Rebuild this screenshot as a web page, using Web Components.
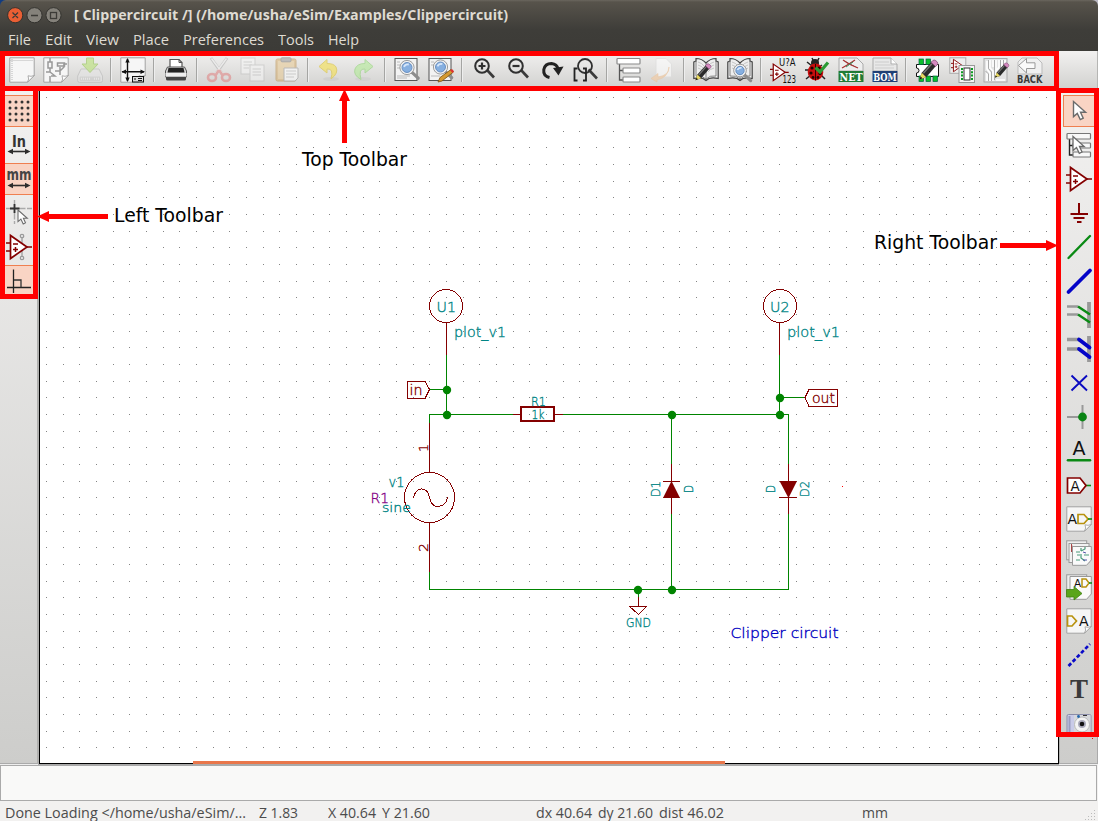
<!DOCTYPE html>
<html lang="en">
<head>
<meta charset="utf-8">
<title>Clippercircuit</title>
<style>
html,body{margin:0;padding:0;background:#fff;overflow:hidden}
body{font-family:"Open Sans","Noto Sans",sans-serif}
</style>
</head>
<body>
<schematic-window></schematic-window>
<script>
const define=(name,html,after)=>{
  const t=document.createElement('template');t.innerHTML=html;
  customElements.define(name,class extends HTMLElement{
    connectedCallback(){
      if(this.shadowRoot)return;
      this.attachShadow({mode:'open'}).appendChild(t.content.cloneNode(true));
      if(after)after(this,this.shadowRoot);
    }
  });
};

/* ---------- icon artwork, 26 x 26 grid ---------- */
const page='<path d="M.8.8H25.2V18.5L18.5 25.2H.8Z" fill="#f6f6f6" stroke="#a2a2a2"/><path d="M18.5 25.2Q20.5 22 19 18.8Q22 20 25.2 18.5Z" fill="#fff" stroke="#999" stroke-width=".8"/>';
const pencil=(x,y,s=1)=>`<g transform="translate(${x} ${y}) scale(${s})"><path d="M0 16L2 10L11 0L15 3.5L6 14Z" fill="#2b2b2b"/><path d="M3.5 10.5L11 2" stroke="#777" stroke-width="1.2"/><path d="M0 16L2 10L6 14Z" fill="#e8d860"/><path d="M0 16L1 13.4L2.6 14.9Z" fill="#111"/><path d="M10.3.8L12 -1Q13.500 -2 15.500 0Q17 1.500 16 2.700L14.400 4.500Z" fill="#d58ac0" stroke="#7d4470" stroke-width=".6"/></g>`;
const lens=(x,y,r)=>`<path d="M${x+r*.7} ${y+r*.7}l7 6.500" stroke="#8d8d8d" stroke-width="3.200" stroke-linecap="round"/><circle cx="${x}" cy="${y}" r="${r}" fill="#86afe0" stroke="#f3f3f3" stroke-width="2.400"/><circle cx="${x}" cy="${y}" r="${r+1.1}" fill="none" stroke="#777" stroke-width=".7"/><circle cx="${x}" cy="${y}" r="${r-1}" fill="none" stroke="#4a78b5" stroke-width=".8"/><path d="M${x-r*.5} ${y-r*.1}Q${x-r*.3} ${y-r*.6} ${x+r*.3} ${y-r*.5}" stroke="#d5e6fa" stroke-width="1.800" fill="none"/>`;
const book='<path d="M.8 5L3 4V1.500Q9 1.500 13 6Q17 1.500 23 1.500V4L25.200 5V21.500Q17 19.500 13 23.500Q9 19.500 .8 21.500Z" fill="#eee" stroke="#444" stroke-width="1.200"/><path d="M3 4V19Q9 18 13 22Q17 18 23 19V4M13 6V22" fill="none" stroke="#777" stroke-width=".9"/><path d="M5 5Q9 6 11 9M5 8Q9 9 11 12M5 11Q9 12 11 15M21 5Q17 6 15 9M21 8Q17 9 15 12M21 11Q17 12 15 15" fill="none" stroke="#bbb" stroke-width=".8"/>';
const zoomg='<path d="M16 13L23 20.500" stroke="#3a3a3a" stroke-width="2.600"/><circle cx="11" cy="9" r="6.800" fill="none" stroke="#303030" stroke-width="2"/>';
const opamp='<g fill="none" stroke="#840000"><path d="M4.500 1.500V24.500L21 13Z" fill="#fff" stroke-width="1.700"/><path d="M0 9H4M0 17H4M21 13H26" stroke-width="1.700"/><path d="M7 10H12M7 15.500H12M9.500 13V18" stroke-width="1.500"/></g>';
const T=(x,y,s,t,c='#111',extra='')=>`<text x="${x}" y="${y}" font-size="${s}" fill="${c}" ${extra}>${t}</text>`;
const cursor='<path d="M0 0V14L3.500 11L6.300 16.800L9 15.500L6.500 10H11.200Z" fill="#fff" stroke="#6b6b6b" stroke-width="1.300"/>';
const arrows='<path d="M4 19.500H22" stroke="#2d2d2d" stroke-width="1.600"/><path d="M1.500 19.500L7 16.800V22.200ZM24.500 19.500L19 16.800V22.200Z" fill="#2d2d2d"/>';
const icons={
new:page+'<path d="M3 2V24M1.500 3.500H24" stroke="#aaa" stroke-width=".8" stroke-dasharray="1 1"/>',
open:page+'<g fill="none" stroke="#999" stroke-width="1.500"><path d="M7 1V5M7 11V15H3M7 15L12 19H8M17 10V18M12 14H17M17 14L21 10V7H24M7 19V25"/><rect x="5" y="5" width="4" height="6"/><rect x="14.500" y="6" width="7" height="3"/></g>',
save:'<g opacity=".55"><path d="M4 12H22L25.500 19V23.500Q25.500 25.300 24 25.300H2.300Q.7 25.300 .7 23.500V19Z" fill="#e6e6e6" stroke="#b5b5b5"/><rect x="2.500" y="19.500" width="21" height="4.500" rx="1" fill="#ccc"/><path d="M4 21.800H13M17 21.800H22" stroke="#eee" stroke-width="2" stroke-dasharray="1 1"/><path d="M9.500 1H16.500V7H21L13 15.500L5 7H9.500Z" fill="#b4e06c" stroke="#8cc048"/></g>',
sheet:page+'<path d="M7.500 2V24M2 14.700H24" stroke="#111" stroke-width="1.400"/><path d="M7.500 1L5.300 5.500H9.700ZM7.500 25L5.300 20.500H9.700ZM1.500 14.700L6 12.500V17ZM25 14.700L20.500 12.500V17Z" fill="#111"/><rect x="12.500" y="19.500" width="11" height="5.500" fill="#ddd" stroke="#111"/><path d="M14 22H16M18 21.500H22M18 23.500H22" stroke="#111"/>',
print:'<path d="M7 12V2.500H16L19 5.500V12Z" fill="#fff" stroke="#555" stroke-width="1.200"/><path d="M16 2.500V5.500H19" fill="none" stroke="#555"/><path d="M4.500 10H21.500L23.500 14V20H2.500V14Z" fill="#d5d5d5" stroke="#555"/><path d="M5.500 11H20.500L21.500 15.500H4.500Z" fill="#222"/><rect x="2.500" y="16" width="21" height="3.500" fill="#eee"/><path d="M3 20H23V22Q23 23.500 21.500 23.500H4.500Q3 23.500 3 22Z" fill="#444"/>',
cut:'<g opacity=".55"><path d="M5 1L17 18M21 1L9 18" stroke="#aaa" stroke-width="3"/><path d="M5.500 1.500L17 17M20.500 1.500L9 17" stroke="#eee" stroke-width="1.500"/><g fill="none" stroke="#e08080" stroke-width="2.600"><ellipse cx="6" cy="20.500" rx="4" ry="3.500"/><ellipse cx="20" cy="20.500" rx="4" ry="3.500"/><path d="M13 13L9 19M13 13L17 19"/></g></g>',
copy:'<g opacity=".5" fill="#f8f8f8" stroke="#bbb"><rect x="1" y="1" width="14" height="16"/><path d="M3.500 5H12M3.500 8H12M3.500 11H9"/><rect x="10" y="8" width="14" height="16"/><path d="M12.500 12H21M12.500 15H21M12.500 18H21"/></g>',
paste:'<g opacity=".55"><rect x="2" y="2" width="20" height="22" rx="1.500" fill="#d8b070" stroke="#b89050"/><rect x="4" y="4" width="16" height="18" fill="#e7c890"/><rect x="7" y="0.800" width="10" height="4" rx="1" fill="#999" stroke="#777"/><path d="M10 11H24V21L21 24H10Z" fill="#fff" stroke="#999"/><path d="M12 14H22M12 17H22M12 20H20" stroke="#bbb"/></g>',
undo:'<g opacity=".65"><ellipse cx="14" cy="22" rx="8" ry="2" fill="#ccc"/><path d="M10 2.500L2 9.500L10 16V12Q17 11 14 22Q22 16 19 10Q17 6.500 10 6.500Z" fill="#f4e05a" stroke="#dcc540"/></g>',
redo:'<g opacity=".5"><ellipse cx="12" cy="22" rx="8" ry="2" fill="#ccc"/><path d="M14 2.500L22 9.500L14 16V12Q7 11 10 22.500Q2 18 4 12Q6 6.500 14 6.500Z" fill="#a9ec88" stroke="#7fd060"/></g>',
find:'<rect x="1" y="1.500" width="22" height="22" fill="#f3f3f3" stroke="#555"/><path d="M3 5H6M3 8H6M3 11H6M3 19H16M3 21H13" stroke="#bbb"/>'+lens(13,10.5,6),
findrep:'<rect x="1" y="1.500" width="22" height="22" fill="#f3f3f3" stroke="#555"/><path d="M3 5H6M3 8H6M3 19H12" stroke="#bbb"/>'+lens(12.5,10,6)+'<path d="M10 25L12 20.500L23 12.500L25.500 15L14 24Z" fill="#d59a30" stroke="#7a5010" stroke-width=".8"/><path d="M22 13.300L24 12L26 14.300L24.500 16Z" fill="#d33"/>',
zin:zoomg+'<path d="M7.500 9H14.500M11 5.500V12.500" stroke="#303030" stroke-width="2.200"/>',
zout:zoomg+'<path d="M7.500 9H14.500" stroke="#303030" stroke-width="2.200"/>',
redraw:'<path d="M10.500 20.500Q4 19 4.800 12.500Q6 6.500 12.500 6.500Q18 7 19 12" fill="none" stroke="#222" stroke-width="3"/><path d="M14 11L24.500 9.500L19.500 18.500Z" fill="#222"/>',
fit:'<path d="M15.500 12.500L24 21.500" stroke="#3a3a3a" stroke-width="2.600"/><circle cx="12" cy="9" r="7" fill="none" stroke="#303030" stroke-width="1.800"/><path d="M4.500 11.500H1.500V23.500H4.500M10 11.500H13V23.500H10" fill="none" stroke="#222" stroke-width="1.800"/>',
tree:'<path d="M3.500 7V23H8M3.500 13.500H8" fill="none" stroke="#555" stroke-width="1.300"/><g fill="#fff" stroke="#8a8a8a" stroke-width="1.200"><rect x="1" y="1.500" width="23" height="5.500" rx=".8"/><rect x="7" y="11" width="17" height="5" rx=".8"/><rect x="7" y="20" width="17" height="5" rx=".8"/></g>',
leave:'<g opacity=".55"><path d="M6 1.500H16L21.500 7V20H6Z" fill="#fff" stroke="#ddd"/><path d="M19 10Q19.500 18 8 20V16.500L1 21.500L7 25V22.800Q18 21 19 10Z" fill="#f8c898" stroke="#f0b880" stroke-width=".6"/></g>',
libedit:book+pencil(2.5,8,.95),
libview:book+lens(13,13.5,5.2),
annotate:'<g transform="translate(0 6) scale(.72)">'+opamp+'</g>'+T(9,9,11,'U?A','#111','textLength="16.500" lengthAdjust="spacingAndGlyphs"')+T(12.500,25.500,11,'123','#111','textLength="13.500" lengthAdjust="spacingAndGlyphs"'),
erc:'<path d="M3 5L8 9M1 13H5M2 22L7 18M21 22L17 18M18 8L15 10M8 1L10 5M15 1L13 5" stroke="#222" stroke-width="1.500"/><circle cx="11" cy="6" r="4" fill="#222"/><ellipse cx="11.500" cy="15" rx="7.800" ry="8.500" fill="#c60d0d"/><path d="M11.500 7V23.500" stroke="#300"/><g fill="#220000"><circle cx="8" cy="11" r="1.600"/><circle cx="15" cy="11" r="1.600"/><circle cx="7" cy="16" r="1.600"/><circle cx="16" cy="16.500" r="1.600"/><circle cx="9" cy="20.500" r="1.400"/><circle cx="14" cy="20.500" r="1.400"/></g><path d="M11.500 10.500L16 15L24 5.500" fill="none" stroke="#2b9a35" stroke-width="3.200"/>',
net:'<path d="M1 1H19L25 7V14H1Z" fill="#eee" stroke="#aaa"/><path d="M4 11L11 7L17 3M5 3L11 7L20 11" stroke="#a33" stroke-width="1.300"/><path d="M8 10L15 5" stroke="#396"/><rect x="0.500" y="14" width="25" height="11" fill="#207b35"/>'+T(1.5,23.7,11.5,'NET','#fff','font-family="DejaVu Serif" font-weight="bold" textLength="23" lengthAdjust="spacingAndGlyphs"'),
bom:'<path d="M1 1H19L25 7V14H1Z" fill="#e8e8e8" stroke="#aaa"/><path d="M19 1V7H25" fill="#fff" stroke="#aaa"/><path d="M3 5H17M3 8H22M3 11H22" stroke="#ccc" stroke-width="1"/><rect x="0.500" y="14" width="25" height="11" fill="#1f3f75"/>'+T(1.2,23.7,11.5,'BOM','#fff','font-family="DejaVu Serif" font-weight="bold" textLength="23.500" lengthAdjust="spacingAndGlyphs"'),
cvpcb:'<path d="M1.500 7.500H23.500V19.500H1.500V16A2 2 0 0 0 1.500 11Z" fill="#fff" stroke="#111"/><g fill="#0bbf2d" stroke="#064" stroke-width=".7"><rect x="4" y="2" width="4.500" height="5.500"/><rect x="11" y="2" width="4.500" height="5.500"/><rect x="4" y="19" width="4.500" height="5.500"/><rect x="11" y="19" width="4.500" height="5.500"/><rect x="18" y="19" width="4.500" height="5.500"/></g>'+pencil(4.5,4.5,1.12),
sym2fp:'<rect x=".8" y=".8" width="16" height="15.500" fill="#eee" stroke="#aaa"/><g transform="translate(2 1.500) scale(.54)">'+opamp+'</g><rect x="10" y="8.500" width="15.500" height="17" fill="#f4f4f4" stroke="#999"/><rect x="15" y="11" width="6" height="12" fill="#fff" stroke="#333"/><path d="M13 11V24M23 11V24" stroke="#0a9a20" stroke-width="2" stroke-dasharray="2 1.300"/>',
pcb:'<rect x="1" y="1.500" width="23" height="23.500" fill="#e4e4e4" stroke="#aaa"/><path d="M4 4V12L7 16V24M7 3V11L10 14V24M10 3V10M13 3V20M16 3V10L14 13M19 3V12M22 3V9M4 16V24M13 23H22" fill="none" stroke="#fff" stroke-width="1.600"/><path d="M5.500 3V11.500L8.500 15V24M11.500 3V23M17.500 3V12M20.500 3V8M2.500 14L5.500 17V24" fill="none" stroke="#999" stroke-width=".8"/>'+pencil(12,7,.85),
back:'<path d="M5 1H20L25 6V17H1V5Z" fill="#f0f0f0" stroke="#bbb"/><path d="M1.500 8.500L9.500 1.500V5.800H18V11.500H9.500V16Z" fill="#fafafa" stroke="#999"/>'+T(0,25.600,10.500,'BACK','#3a3a3a','font-weight="bold" textLength="25.500" lengthAdjust="spacingAndGlyphs"'),
grid:'<g fill="#333">'+[4,10,16,22].map(y=>[4,10,16,22].map(x=>`<circle cx="${x}" cy="${y}" r="1.500"/>`).join('')).join('')+'</g>',
inch:T(6,14.5,15,'In','#333','font-weight="bold" textLength="14" lengthAdjust="spacingAndGlyphs"')+arrows,
mm:T(.5,13.500,15,'mm','#444','font-weight="bold" textLength="25" lengthAdjust="spacingAndGlyphs"')+arrows,
cross:'<path d="M8.500 0V24M0 8.500H26" stroke="#aaa" stroke-width="1.400" stroke-dasharray="9 1.500"/><path d="M8.500 4V13M4 8.500H13.500" stroke="#333" stroke-width="1.800"/><g transform="translate(12 10) scale(.83)">'+cursor+'</g>',
pins:'<path d="M16 2V24" stroke="#aaa" stroke-width="1.600"/><g fill="#eee" stroke="#999" stroke-width="1.300"><circle cx="16" cy="2" r="1.700"/><circle cx="16" cy="24" r="1.700"/></g>'+opamp,
ortho:'<path d="M7.500 1.500V25M1 19.500H25" stroke="#222" stroke-width="1.300"/><path d="M8 12H15V19" fill="none" stroke="#333" stroke-width="1.300"/>',
arrow:'<g transform="translate(7.500 3.500) scale(1.080)">'+cursor+'</g>',
hier:'<path d="M3.500 7V23H8M3.500 13.500H8" fill="none" stroke="#222" stroke-width="1.400"/><g fill="#f8f8f8" stroke="#777" stroke-width="1.200"><rect x="1" y="1.500" width="23.500" height="5.500" rx=".8"/><rect x="7" y="11" width="17.500" height="5" rx=".8"/><rect x="7" y="20" width="17.500" height="5" rx=".8"/></g><g transform="translate(7 4.500)">'+cursor+'</g>',
opamp,
gnd:'<path d="M13 3V14M4.500 14H22M7.500 18H18.500M11 22H15.500" stroke="#840000" stroke-width="2" fill="none"/>',
wire:'<path d="M2.500 24L24 2" stroke="#0a8a14" stroke-width="2.300" stroke-linecap="round"/>',
bus:'<path d="M2.500 24L24 2.500" stroke="#0404c8" stroke-width="3.800" stroke-linecap="round"/>',
w2b:'<path d="M23 0V26" stroke="#999" stroke-width="3.800"/><path d="M1 4.500H12M1 12.500H12" stroke="#999" stroke-width="2.400"/><path d="M12 4.500L24 12.500M12 12.500L24 20.500" stroke="#0a8a14" stroke-width="2.400"/>',
b2b:'<path d="M23 0V26" stroke="#999" stroke-width="3.800"/><path d="M1 3.500H13M1 13H13" stroke="#999" stroke-width="3.600"/><path d="M13 3.500L23.500 11.500M13 13L23.500 21" stroke="#0404c8" stroke-width="3.800" stroke-linecap="round"/>',
noconn:'<path d="M5.500 5.500L21 20.500M21 5.500L5.500 20.500" stroke="#0a0ac0" stroke-width="1.900"/>',
junction:'<path d="M16.500 1V25M1 13H16" stroke="#999" stroke-width="2"/><circle cx="16.500" cy="13" r="4.400" fill="#0a8414"/>',
label:T(6.500,17,19,'A','#111','textLength="13" lengthAdjust="spacingAndGlyphs"')+'<path d="M2 22.300H24" stroke="#0a8a14" stroke-width="2.600" stroke-linecap="round"/>',
glabel:'<path d="M20 13.500H25" stroke="#0a8a14" stroke-width="1.600"/><path d="M1.500 6H14L20 13.500L14 21H1.500Z" fill="#fff" stroke="#840000" stroke-width="1.700"/>'+T(4.500,18.500,13.500,'A'),
hlabel:page+T(1.500,18,14,'A')+'<path d="M12 8.500H18L22 13L18 17.500H12Z" fill="none" stroke="#b8920e" stroke-width="1.700"/><path d="M22 13H26" stroke="#0a8a14" stroke-width="1.600"/>',
sheets:'<rect x=".7" y=".8" width="20" height="19" fill="#eee" stroke="#999"/><rect x="3" y="3.500" width="20" height="19" fill="#f2f2f2" stroke="#999"/><path d="M5.500 4V12M5.500 6L9 7" stroke="#a44" fill="none"/><path d="M6.500 6.500H25.300V20L20.500 25.300H6.500Z" fill="#fafafa" stroke="#999"/><path d="M10 12H14M15 8V11M15 11L19 9V7M15 14V18L19 21M14 15H11M18 15H23M10 20H14" stroke="#4a9a7a" fill="none" stroke-width="1.200"/><path d="M17 12L20 13M17 20H21" stroke="#55a"/>',
imp:'<rect x=".7" y=".8" width="20" height="19" fill="#eee" stroke="#999"/><path d="M4 2.500H25.300V20L20.500 25.300H4Z" fill="#fafafa" stroke="#999"/>'+T(8,13,10.500,'A')+'<path d="M16 5H20L23 9L20 13H16Z" fill="none" stroke="#b8920e" stroke-width="1.500"/><path d="M23 9H26" stroke="#0a8a14" stroke-width="1.500"/><path d="M.5 15.500H8V12.500L16 19.500L8 26V23H.5Z" fill="#5aa51a" stroke="#3f8010" stroke-width=".8"/>',
pin:page+'<path d="M1.500 8H6L10.500 13L6 18H1.500Z" fill="none" stroke="#b8920e" stroke-width="1.700"/>'+T(13,18,14,'A'),
dash:'<path d="M2.500 24L24 2" stroke="#0a0ac8" stroke-width="2.700" stroke-dasharray="3.800 2.200"/>',
text:T(4,21.500,27,'T','#3a3a3a','font-family="Liberation Serif" font-weight="bold"'),
image:'<rect x="1" y="4.500" width="24" height="21" rx="1.500" fill="#c9cbe8" stroke="#8a8ca8"/><path d="M3.500 6V24" stroke="#9a9cc0" stroke-width="2"/><rect x="8" y="5" width="16.500" height="20" fill="#d6d8dc"/><circle cx="16" cy="14.500" r="7.500" fill="#f4f4f4" stroke="#bbb"/><circle cx="16" cy="14" r="4" fill="#aab"/><circle cx="16" cy="14" r="2.300" fill="#111"/><circle cx="12.500" cy="6.500" r="1.400" fill="#26a"/><path d="M17 5.500H21" stroke="#333"/>'
};
define('tool-icon','<style>:host{display:block;width:26px;height:26px;flex:none}svg{display:block;font-family:"DejaVu Sans",sans-serif;overflow:visible}</style><svg width="26" height="26" viewBox="0 0 26 26"></svg>',
 (h,r)=>{r.querySelector('svg').innerHTML=icons[h.getAttribute('name')]||'';});

define('tool-button','<style>:host{display:flex;box-sizing:border-box;height:34px;justify-content:center;align-items:center;flex:none}:host([active]) div{background:#f9d4c4;border-top:1px solid #ef7f50;border-bottom:1px solid #ef7f50}:host([framed]) div{border-left:1px solid #ef7f50}div{box-sizing:border-box;width:100%;height:32px;display:flex;align-items:center;justify-content:center;border:0 solid}</style><div><slot></slot></div>');

/* single-line label that scales its glyphs to a given width */
define('fit-label','<style>:host{display:block;white-space:pre;flex:none;box-sizing:border-box}span{display:inline-block;transform-origin:0 50%}</style><span><slot></slot></span>',
 (h,r)=>{const s=r.querySelector('span'),w=+h.getAttribute('w');h.style.width=w+'px';
  s.style.transform=`scaleX(${w/s.getBoundingClientRect().width})`;});

define('title-bar',`<style>
:host{display:flex;flex-direction:column;height:51px;background:linear-gradient(#6a665e 0,#57534b 2px,#3e3d39 30px,#3c3b37 51px);border-radius:6px 6px 0 0;color:#dfdbd2}
.t{display:flex;height:29px;align-items:center;padding-left:7px}
svg{display:block}
fit-label{margin-left:12px;font-weight:bold;font-size:14.5px;line-height:20px}
nav{display:flex;padding-left:8px;gap:14px;height:22px;align-items:center}
nav fit-label{margin:0;font-weight:normal;font-size:14.5px;line-height:20px}
</style>
<div class="t"><svg width="55" height="18" viewBox="7 5 55 18"><g stroke="#33322e"><circle cx="15.200" cy="14.200" r="7.600" fill="#ea5f34"/><circle cx="34.500" cy="14.200" r="7.600" fill="#85827b"/><circle cx="53.500" cy="14.200" r="7.600" fill="#85827b"/></g><g fill="none" stroke="#3c3b37" stroke-width="1.300"><path d="M12.500 11.500l5.500 5.500m0-5.500l-5.500 5.500M31 14.500h7"/><rect x="50.500" y="11.500" width="6" height="6"/></g></svg>
<fit-label w="434">[ Clippercircuit /] (/home/usha/eSim/Examples/Clippercircuit)</fit-label></div>
<nav><fit-label w="23">File</fit-label><fit-label w="27">Edit</fit-label><fit-label w="33">View</fit-label><fit-label w="36">Place</fit-label><fit-label w="81">Preferences</fit-label><fit-label w="36">Tools</fit-label><fit-label w="31">Help</fit-label></nav>`);

define('top-toolbar',`<style>:host{display:flex;height:40px;box-sizing:border-box;padding:6px 0 0 9px;background:linear-gradient(#f2f1f0,#cfcfcd);border-right:1px solid #b5b5b3}
tool-icon{margin-right:8px}i{display:block;width:2px;height:24px;margin:1px 8px 0 -1px;background:linear-gradient(90deg,#a5a5a3 50%,#eee 50%);flex:none}</style><slot></slot><div id="x" style="display:contents"></div>`,
 (h,r)=>{r.getElementById('x').innerHTML='new open save | sheet | print | cut copy paste | undo redo | find findrep | zin zout redraw fit | tree leave | libedit libview | annotate erc net bom | cvpcb sym2fp pcb back'.split(' ').map(n=>n=='|'?'<i></i>':`<tool-icon name="${n}"></tool-icon>`).join('');});

define('left-toolbar',`<style>:host{display:flex;flex-direction:column;box-sizing:border-box;width:39px;padding:3px 4px 0 5px;background:linear-gradient(#f2f1f0,#cdcdcb);border-right:2px solid #b0b0ae;border-bottom:1px solid #aaa}</style>
<tool-button active><tool-icon name="grid"></tool-icon></tool-button><tool-button><tool-icon name="inch"></tool-icon></tool-button><tool-button active><tool-icon name="mm"></tool-icon></tool-button><tool-button><tool-icon name="cross"></tool-icon></tool-button><tool-button><tool-icon name="pins"></tool-icon></tool-button><tool-button active><tool-icon name="ortho"></tool-icon></tool-button>`);

define('right-toolbar',`<style>:host{display:block;box-sizing:border-box;width:39px;height:673px;background:linear-gradient(#f2f1f0,#cdcdcb);border-left:1px solid #b0b0ae;border-right:1px solid #aaa;border-bottom:1px solid #aaa}
div{display:flex;flex-direction:column;height:641px;overflow:hidden;padding:3px 3px 0 3px}</style><div></div>`,
 (h,r)=>{r.querySelector('div').innerHTML='arrow hier opamp gnd wire bus w2b b2b noconn junction label glabel hlabel sheets imp pin dash text image'.split(' ').map((n,i)=>`<tool-button ${i?'':'active framed'}><tool-icon name="${n}"></tool-icon></tool-button>`).join('');});

/* schematic sheet, drawn in window coordinates */
const st=(x,y,w,s,t,c='#008484',rot='')=>`<text x="${x}" y="${y}" textLength="${w}" lengthAdjust="spacingAndGlyphs" font-size="${s}" fill="${c}" stroke="${c}" stroke-width=".35" ${rot?`transform="rotate(-90 ${x} ${y})"`:''}>${t}</text>`;
let dots='';for(const y of[6,23,40])for(const x of[6,23,39])dots+=`<rect x="${x}" y="${y}" width="1" height="1"/>`;
define('schematic-sheet',`<style>:host{display:block;width:1020px;height:673px;box-sizing:border-box;border:solid #000;border-width:0 1px 1px 1px;background:#fff}
svg{display:block;font-family:"DejaVu Sans Light","DejaVu Sans",sans-serif;font-weight:200}</style>
<svg width="1018" height="672" viewBox="40 91 1018 672">
<defs><pattern id="g" x="40" y="91" width="50" height="50" patternUnits="userSpaceOnUse"><g fill="#848484" shape-rendering="crispEdges">${dots}</g></pattern></defs>
<rect x="40" y="91" width="1018" height="672" fill="url(#g)"/>
<g fill="none" shape-rendering="crispEdges" stroke-width="1">
<g stroke="#008400"><path d="M446.500 355V415M429 389.500H447M429.500 423V414.500H513M563 414.500H788.500V464M779.500 355V415M780 397.500H805M671.500 415V464M671.500 514V590M788.500 514V589M429.500 572V589.500H788.500M638.500 590V597"/></g>
<g stroke="#840000"><path d="M446.500 323V355M779.500 323V355M513 414.500H520M555 414.500H563M429.500 423V472M429.500 522V572M671.500 464V514M788.500 464V514M638.500 597V606M663 481.500H680M779 497.500H797M629.500 606.500H646.500L638.500 614.500Z"/>
<path d="M407.500 381.500H425L429.500 389.500L425 398.500H407.500ZM837.500 389.500H809L805 397.500L809 406.500H837.500Z"/>
<circle cx="446" cy="306" r="16.500"/><circle cx="780" cy="306" r="16.500"/><circle cx="429.500" cy="497.500" r="25"/>
<path d="M413.500 498.500C414 487 428 485 429.500 497.500C431 511 447 508 447.500 497"/><rect x="521" y="407" width="33" height="14" stroke-width="2"/></g></g>
<path d="M671.500 481L680 498H663ZM788.500 498L797 481H779.500Z" fill="#840000"/>
<g fill="#008400"><circle cx="447" cy="390" r="4.200"/><circle cx="447" cy="415" r="4.200"/><circle cx="672" cy="415" r="4.200"/><circle cx="780" cy="398" r="4.200"/><circle cx="780" cy="415" r="4.200"/><circle cx="638" cy="590" r="4.200"/><circle cx="672" cy="590" r="4.200"/></g>
${st(436.5,312,19.5,14.5,'U1')+st(770,312,19.5,14.5,'U2')+st(454,337,52,14.5,'plot_v1')+st(787,337,53,14.5,'plot_v1')+st(531,406,15,13,'R1')+st(531.5,419,13,11.5,'1k')+st(409.500,395,13,14,'in','#840000')+st(812,403,23,14,'out','#840000')+st(388.5,487,16,13.5,'v1')+st(370.5,503,18.5,14.5,'R1','#840084')+st(382,511.5,29,12.5,'sine')+st(428,452,8,12,'1','#840000',1)+st(428,552,9,12,'2','#840000',1)+st(660,497,16,13,'D1','#008484',1)+st(693,493,8,12,'D','#008484',1)+st(775,493,8,12,'D','#008484',1)+st(809,497,16,13,'D2','#008484',1)+st(626,627,25,12,'GND')+st(730.5,637.5,108,14.5,'Clipper circuit','#0000c2')}
<rect x="842" y="486" width="1" height="1" fill="#f00"/>
</svg>`);

define('message-panel','<style>:host{display:block;box-sizing:border-box;height:36px;width:1097px;border:1px solid #aaa;background:#f9f9f8}</style><slot></slot>');

define('status-bar',`<style>:host{display:grid;grid-template-columns:254px 69px 208px 326px 1fr;height:20px;width:1098px;box-sizing:border-box;padding-left:5px;background:#f2f1f0;color:#4c4c4c;font-size:14.5px;line-height:24px;position:relative}.r{display:flex;gap:6px}svg{position:absolute;right:2px;bottom:0}</style>
<fit-label w="241">Done Loading &lt;/home/usha/eSim/...</fit-label><fit-label w="39">Z 1.83</fit-label><div class="r"><fit-label w="48">X 40.64</fit-label><fit-label w="48">Y 21.60</fit-label></div><div class="r"><fit-label w="56">dx 40.64</fit-label><fit-label w="55">dy 21.60</fit-label><fit-label w="65">dist 46.02</fit-label></div><fit-label w="26">mm</fit-label>
<svg width="11" height="12" viewBox="0 0 11 12"><g fill="#bbb"><rect x="9" y="1" width="1" height="1"/><rect x="6" y="4" width="1" height="1"/><rect x="9" y="4" width="1" height="1"/><rect x="3" y="7" width="1" height="1"/><rect x="6" y="7" width="1" height="1"/><rect x="9" y="7" width="1" height="1"/><rect x="0" y="10" width="1" height="1"/><rect x="3" y="10" width="1" height="1"/><rect x="6" y="10" width="1" height="1"/><rect x="9" y="10" width="1" height="1"/></g></svg>`);

define('callout-layer',`<style>:host{position:absolute;inset:0;pointer-events:none}svg{display:block;font-family:"DejaVu Sans",sans-serif}</style>
<svg width="1102" height="821"><path d="M193 762.500H725" stroke="#e9774b" stroke-width="3"/>
<g fill="none" stroke="#f00" stroke-width="5"><rect x="2.500" y="53.500" width="1054" height="35"/><path d="M2.500 88V296.500H35.500V88"/><rect x="1058.500" y="90.500" width="38" height="644"/><path d="M344.500 143V98M108 216.500H46M1000 245.500H1048"/></g>
<path d="M344.500 89L350 101H339ZM37 216.500L49 211V222ZM1058 245.500L1046 240V251ZM1092 738h1v1h-1z" fill="#f00"/>
<g font-size="18.700" fill="#000"><text x="302" y="166" textLength="105" lengthAdjust="spacingAndGlyphs">Top Toolbar</text><text x="114" y="222" textLength="109" lengthAdjust="spacingAndGlyphs">Left Toolbar</text><text x="874" y="249" textLength="123" lengthAdjust="spacingAndGlyphs">Right Toolbar</text></g></svg>`);

define('schematic-window',`<style>:host{display:block;position:relative;width:1098px;height:821px;background:linear-gradient(90deg,#123c80 8px,#bbb9c4 20px) 0 0/100% 8px no-repeat,#f2f1f0}main{display:flex;height:673px}.gap{height:1px;background:linear-gradient(90deg,#eee 38px,#aaa 38px 1059px,#eee 1059px)}</style>
<title-bar></title-bar><top-toolbar></top-toolbar><main><left-toolbar></left-toolbar><schematic-sheet></schematic-sheet><right-toolbar></right-toolbar></main><div class="gap"></div><message-panel></message-panel><status-bar></status-bar><callout-layer></callout-layer>`);
</script>
</body>
</html>
